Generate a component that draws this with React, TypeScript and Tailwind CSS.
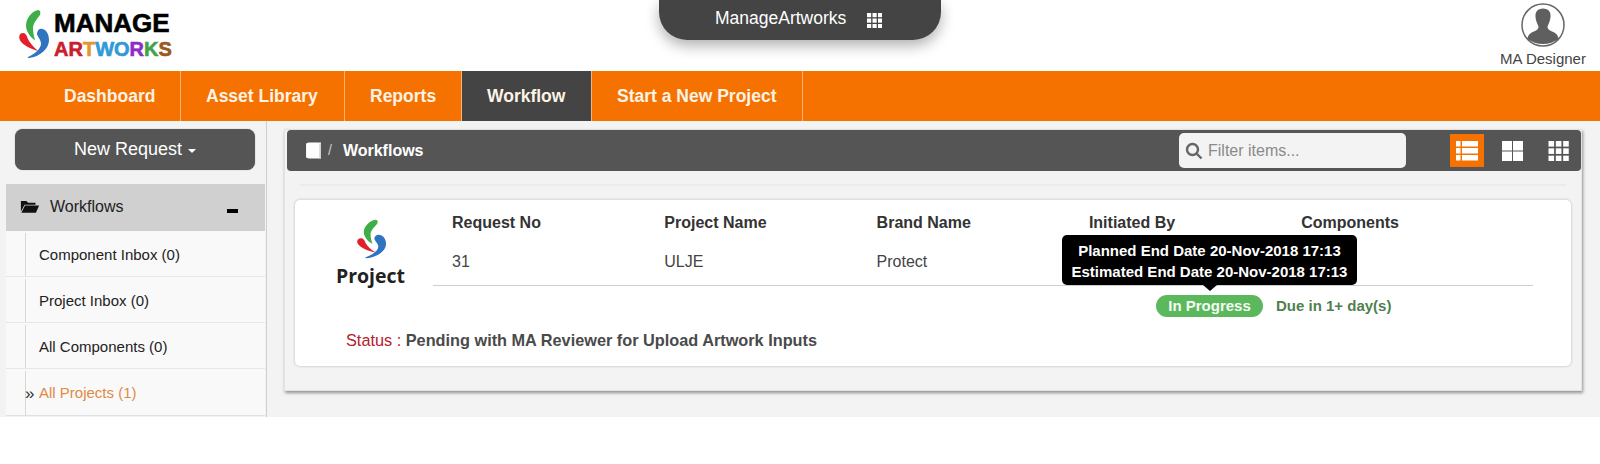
const sans = { fontFamily: '"Liberation Sans", Arial, sans-serif' }

function Drops({ className }: { className: string }) {
  return (
    <svg viewBox="5 3 31 48" preserveAspectRatio="none" className={className}>
      <path d="M24 4C27 4 27 8 25 10C22 14 19 17 19 22C19 26 20 29 21 33C16 30 12 24 12 19C12 12 18 5 24 4Z" fill="#3fae49" />
      <path d="M27 22C32 22 35 27 35 33C35 41 26 49 15 50C14 50 13 49.500 14 49C21 46 27 41 27 36C27 32 22.500 29 23 26C23.500 24 25 22 27 22Z" fill="#2f74c0" />
      <path d="M9 26C12 26 13 29 14 32C16 36 20 40 24 43C18 42 9 38 6 33C4 29 6 26 9 26Z" fill="#e2202c" />
    </svg>
  )
}

function Grid3({ className }: { className: string }) {
  const cells = [0, 5.500, 11]
  return (
    <svg viewBox="0 0 15 15" className={className} fill="#fff">
      {cells.map((y) => cells.map((x) => <rect key={`${x}-${y}`} x={x} y={y} width="4.200" height="4.200" />))}
    </svg>
  )
}

const artworks = [
  ['A', '#c8202f'],
  ['R', '#c8202f'],
  ['T', '#e2992c'],
  ['W', '#2f9ad6'],
  ['O', '#2f9ad6'],
  ['R', '#8e2bc9'],
  ['K', '#3fa34a'],
  ['S', '#9a5a1c'],
]

const navItems = [
  { label: 'Dashboard', w: 'w-[181px] pl-[64px]' },
  { label: 'Asset Library', w: 'w-[164px] pl-[25px]' },
  { label: 'Reports', w: 'w-[117px] pl-[25px]' },
  { label: 'Workflow', w: 'w-[130px] pl-[25px] bg-[#444444]' },
  { label: 'Start a New Project', w: 'w-[211px] pl-[25px]' },
]

const sideItems = ['Component Inbox (0)', 'Project Inbox (0)', 'All Components (0)']

const columns = [
  { head: 'Request No', value: '31' },
  { head: 'Project Name', value: 'ULJE' },
  { head: 'Brand Name', value: 'Protect' },
  { head: 'Initiated By', value: '' },
  { head: 'Components', value: '' },
]

export default function App() {
  return (
    <div className="min-h-[464px] bg-white text-[#333]" style={sans}>
      <header className="relative flex h-[71px] justify-between">
        <div className="flex pl-[19px] pt-[9px]">
          <Drops className="h-[50px] w-[31px]" />
          <div className="ml-[4px] [-webkit-text-stroke:0.6px]">
            <div className="h-[29px] whitespace-nowrap text-[26px] font-bold leading-[29px] text-black">MANAGE</div>
            <div className="h-[23px] whitespace-nowrap text-[20px] font-bold leading-[23px]">
              {artworks.map(([c, color], i) => (
                <span key={i} style={{ color }}>{c}</span>
              ))}
            </div>
          </div>
        </div>
        <div className="absolute left-[659px] top-0 flex h-[40px] w-[282px] items-center rounded-b-[28px] bg-[#444444] pb-[4px] pl-[56px] shadow-[0_6px_14px_rgba(0,0,0,0.3)]">
          <span className="text-[17.500px] text-white">ManageArtworks</span>
          <Grid3 className="ml-[21px] mt-[5px] h-[15px] w-[15px]" />
        </div>
        <div className="flex w-[100px] flex-col items-center pr-[14px] pt-[3px]">
          <svg viewBox="0 0 44 44" className="h-[44px] w-[44px] shrink-0">
            <circle cx="22" cy="22" r="21" fill="#fff" stroke="#666" strokeWidth="1.500" />
            <path d="M22 5.500C27.500 5.500 30 9 29.500 14C29.300 18 27.500 21 26.500 23.500C26.500 26 28 27 31 28.500C35 30 37 32 37.500 36C33 39 28 41 22 41C16 41 11 39 6.500 36C7 32 9 30 13 28.500C16 27 17.500 26 17.500 23.500C16.500 21 14.700 18 14.500 14C14 9 16.500 5.500 22 5.500Z" fill="#5f5f5f" />
          </svg>
          <span className="mt-[2px] whitespace-nowrap text-[15px] leading-[20px] text-[#444]">MA Designer</span>
        </div>
      </header>

      <nav className="flex h-[50px] bg-[#f57200]">
        {navItems.map((item) => (
          <div
            key={item.label}
            className={`flex items-center border-r border-[#f8b27a] text-[17.500px] font-bold text-[#fdf3e6] ${item.w}`}
          >
            {item.label}
          </div>
        ))}
      </nav>

      <div className="flex h-[296px] bg-[#f3f3f3]">
        <aside className="w-[267px] shrink-0 border-r border-[#cfcfcf] pt-[8px]">
          <div className="pl-[15px] pr-[11px]">
            <button className="flex h-[41px] w-[240px] items-center justify-center rounded-[8px] bg-[#555555] text-[18px] text-white shadow-[0_0_1px_rgba(0,0,0,0.5)]">
              New Request
              <span className="ml-[6px] mt-[2px] border-x-[4px] border-t-[4px] border-x-transparent border-t-white" />
            </button>
          </div>
          <div className="ml-[6px] mr-px mt-[14px] flex h-[47px] items-center bg-[#d0d0d0] pb-[2px] pl-[14px] pr-[27px] text-[#222]">
            <svg viewBox="0 0 22 16" className="h-[15px] w-[20px]" fill="#111">
              <path d="M1 2h6l2 2h8v2H5L1 13.500V2Z" />
              <path d="M5.500 7H21l-3.500 8H1.500L5.500 7Z" />
            </svg>
            <span className="ml-[10px] text-[16px]">Workflows</span>
            <span className="ml-auto mt-[8px] h-[4px] w-[11px] bg-black" />
          </div>
          <ul className="ml-[6px] mr-px bg-[#f9f9f9]">
            {sideItems.map((label) => (
              <li key={label} className="flex h-[46px] border-b border-[#e6e6e6] pl-[19px] text-[15px] text-[#222]">
                <span className="mr-[13px] h-[43px] w-px self-end bg-[#d8d8d8]" />
                <span className="self-center pt-[3px]">{label}</span>
              </li>
            ))}
            <li className="flex h-[47px] border-b border-[#e0e0e0] pl-[19px] text-[15px] text-[#e08a45]">
              <span className="h-[44px] w-px self-end bg-[#d8d8d8]" />
              <span className="-ml-px w-[14px] self-center pt-[3px] text-[17px] leading-[20px] text-[#333]">»</span>
              <span className="self-center pt-[3px]">All Projects (1)</span>
            </li>
          </ul>
        </aside>

        <main className="pl-[17px] pt-[8px]">
          <div className="h-[262px] w-[1298px] border border-[#e2e2e2] bg-[#f3f3f3] shadow-[1px_2px_3px_rgba(0,0,0,0.4)]">
            <div className="ml-[2px] flex h-[41px] w-[1294px] items-center rounded-[4px] bg-[#555555] pl-[18px] pr-[12px]">
              <svg viewBox="0 0 16 16" className="h-[17px] w-[17px]">
                <path d="M1 1.500L3.500 .5H15V15.500H3.500L1 14.500Z" fill="#fff" />
                <path d="M13.500 1.500h1.500v14h-1.500Z" fill="#cfcfcf" />
              </svg>
              <span className="ml-[6px] text-[14px] text-[#ccc]">/</span>
              <span className="ml-[11px] text-[16px] font-bold text-white">Workflows</span>
              <div className="ml-auto flex h-[35px] w-[227px] items-center rounded-[5px] bg-[#f3f3f3] pl-[6px]">
                <svg viewBox="0 0 18 18" className="h-[18px] w-[18px]" fill="none" stroke="#666" strokeWidth="2.400">
                  <circle cx="7.500" cy="7.500" r="5.500" />
                  <path d="M11.500 11.500L16.500 16.500" />
                </svg>
                <span className="ml-[5px] text-[16px] text-[#8a8a8a]">Filter items...</span>
              </div>
              <div className="ml-[44px] flex h-[33px] w-[34px] items-center justify-center bg-[#f57200]">
                <svg viewBox="0 0 22 20" className="h-[20px] w-[22px]" fill="#fff">
                  {[0, 7, 14].map((y) => (
                    <g key={y}>
                      <rect x="0" y={y} width="4.500" height="5.500" />
                      <rect x="6" y={y} width="16" height="5.500" />
                    </g>
                  ))}
                </svg>
              </div>
              <svg viewBox="0 0 21 20" className="ml-[18px] h-[20px] w-[21px]" fill="#fff">
                <rect width="10" height="9.500" />
                <rect x="11" width="10" height="9.500" />
                <rect y="10.500" width="10" height="9.500" />
                <rect x="11" y="10.500" width="10" height="9.500" />
              </svg>
              <Grid3 className="ml-[25px] h-[20px] w-[21px]" />
            </div>

            <div className="mx-[15px] mt-[13px] h-[2px] bg-[#ebebeb]" />

            <section className="relative ml-[10px] mt-[14px] h-[166px] w-[1276px] rounded-[5px] bg-white shadow-[0_0_3px_rgba(0,0,0,0.25)]">
              <div className="flex h-[90px]">
                <div className="flex w-[138px] shrink-0 flex-col items-center pl-[13px] pt-[19px]">
                  <Drops className="h-[40px] w-[30px] shrink-0 translate-x-px" />
                  <span className="mt-[3px] text-[19.500px] font-bold leading-[27px] text-[#222]" style={{ fontFamily: '"Open Sans", sans-serif' }}>
                    Project
                  </span>
                </div>
                <div className="h-[86px] w-[1100px] border-b border-[#cfcfcf]">
                  <div className="grid grid-cols-[212.300px_212.300px_212.300px_212.300px_1fr] pl-[19px]">
                    {columns.map((col) => (
                      <div key={col.head}>
                        <div className="mt-[14px] text-[16px] font-bold leading-[18px] text-[#333]">{col.head}</div>
                        <div className="mt-[21px] text-[16px] leading-[18px] text-[#444]">{col.value}</div>
                      </div>
                    ))}
                  </div>
                </div>
              </div>

              <div className="absolute left-[767px] top-[35px] flex h-[50px] w-[295px] flex-col items-center justify-center rounded-[5px] bg-black pt-[1px] text-[15px] font-bold leading-[21px] text-white">
                <span>Planned End Date 20-Nov-2018 17:13</span>
                <span>Estimated End Date 20-Nov-2018 17:13</span>
                <span className="absolute -bottom-[6px] left-[141px] border-x-[7px] border-t-[6px] border-x-transparent border-t-black" />
              </div>

              <div className="mt-[5px] flex items-center pl-[861px]">
                <span className="flex h-[22px] w-[107px] items-center justify-center rounded-full bg-[#5cb85c] text-[15px] font-bold text-[#f4fbf4]">
                  In Progress
                </span>
                <span className="ml-[13px] text-[15px] font-bold text-[#4f7f4f]">Due in 1+ day(s)</span>
              </div>

              <div className="mt-[12px] pl-[51px] text-[16.300px] leading-[20px]">
                <span className="text-[#b3202a]">Status : </span>
                <span className="font-bold text-[#4a4a4a]">Pending with MA Reviewer for Upload Artwork Inputs</span>
              </div>
            </section>
          </div>
        </main>
      </div>
    </div>
  )
}
